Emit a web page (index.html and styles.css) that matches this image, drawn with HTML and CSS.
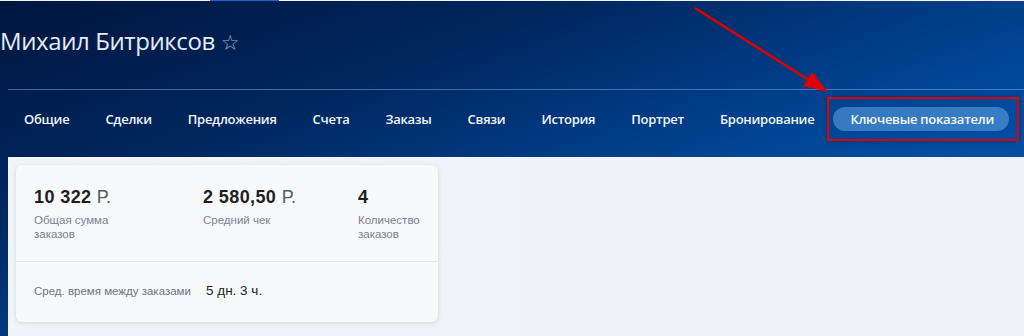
FILE: index.html
```html
<!DOCTYPE html>
<html lang="ru">
<head>
<meta charset="utf-8">
<link rel="stylesheet" href="styles.css">
</head>
<body>
<div class="page">
  <div class="topline"><span class="topline-mark"></span></div>
  <header class="header">
    <h1 class="title">Михаил Битриксов <span class="star">☆</span></h1>
  </header>
  <nav class="tabs">
    <a class="tab">Общие</a>
    <a class="tab">Сделки</a>
    <a class="tab">Предложения</a>
    <a class="tab">Счета</a>
    <a class="tab">Заказы</a>
    <a class="tab">Связи</a>
    <a class="tab">История</a>
    <a class="tab">Портрет</a>
    <a class="tab">Бронирование</a>
    <div class="highlight"><a class="tab tab-active">Ключевые показатели</a></div>
  </nav>
  <main class="content">
    <section class="card">
      <div class="stats">
        <div class="stat s1">
          <div class="value">10 322 <span class="cur">Р.</span></div>
          <div class="label">Общая сумма<br>заказов</div>
        </div>
        <div class="stat s2">
          <div class="value">2 580,50 <span class="cur">Р.</span></div>
          <div class="label">Средний чек</div>
        </div>
        <div class="stat s3">
          <div class="value">4</div>
          <div class="label">Количество<br>заказов</div>
        </div>
      </div>
      <div class="extra">
        <span class="extra-label">Сред. время между заказами</span>
        <span class="extra-value">5 дн. 3 ч.</span>
      </div>
    </section>
  </main>
  <svg class="arrow" width="1024" height="336" viewBox="0 0 1024 336">
    <line x1="695" y1="8" x2="815" y2="84" stroke="#e00000" stroke-width="2.5"/>
    <polygon points="828,92 803,86 812,72" fill="#e00000"/>
  </svg>
</div>
</body>
</html>
```

FILE: styles.css
```css
* { box-sizing: border-box; margin: 0; padding: 0; }
html, body { width: 1024px; height: 336px; overflow: hidden; }
body {
  font-family: "Open Sans", "Liberation Sans", sans-serif;
  background: #fff;
}
.page {
  position: relative;
  width: 1024px;
  height: 336px;
  background: linear-gradient(160deg, #00163f 0%, #00275f 30%, #004696 60%, #0a5ec0 100%);
  overflow: hidden;
}
.topline {
  height: 1px;
  background: #f2f4f7;
  display: flex;
}
.topline-mark {
  margin-left: 210px;
  width: 69px;
  height: 1px;
  background: #1e5fd6;
}
.header {
  height: 88px;
  padding-top: 24px;
}
.title {
  font-family: "Open Sans", sans-serif;
  font-weight: 400;
  font-size: 24px;
  line-height: 32px;
  color: #e6ebf2;
  letter-spacing: -0.4px;
}
.star {
  font-size: 21px;
  color: #9fb0c8;
  font-family: "DejaVu Sans", sans-serif;
}
.tabs {
  margin-left: 8px;
  border-top: 1px solid rgba(160, 185, 220, 0.45);
  height: 68px;
  display: flex;
  align-items: center;
  padding-left: 16px;
  padding-bottom: 10px;
}
.tab {
  font-family: "Open Sans", sans-serif;
  font-weight: 600;
  font-size: 13px;
  line-height: 18px;
  color: #f1f4f8;
  margin-right: 36px;
  white-space: nowrap;
  letter-spacing: -0.26px;
}
.highlight {
  border: 2px solid #e00000;
  margin-left: -23px;
  padding: 8px 8px 8px 4px;
  box-shadow: 0 0 4px rgba(0,0,0,0.3);
}
.tab-active {
  display: block;
  margin: 0;
  background: rgba(120, 185, 245, 0.45);
  border-radius: 12px;
  padding: 3px 15px 3px 17px;
  color: #f4f7fb;
}
.content {
  margin-left: 8px;
  height: 179px;
  background: linear-gradient(90deg, #f1f4f8, #eef2f6);
  padding: 8px 0 0 8px;
}
.card {
  width: 422px;
  height: 157px;
  background: #f7f9fb;
  border-radius: 6px;
  box-shadow: 0 1px 5px rgba(0, 0, 0, 0.12);
  font-family: "Liberation Sans", Arial, sans-serif;
}
.stats {
  display: flex;
  height: 97px;
  padding: 22px 0 0 18px;
  border-bottom: 1px solid #e4e8ed;
}
.stat .value {
  font-size: 18px;
  font-weight: 700;
  color: #1d1f22;
  line-height: 20px;
  letter-spacing: 0.4px;
}
.stat .cur {
  font-weight: 400;
  color: #535c69;
  letter-spacing: 0.6px;
}
.stat .label {
  margin-top: 6px;
  font-size: 11.5px;
  line-height: 14px;
  color: #7a8290;
}
.s1 { width: 169px; }
.s2 { width: 155px; }
.s3 { width: 80px; }
.extra {
  display: flex;
  align-items: center;
  padding: 21px 0 0 18px;
}
.extra-label {
  font-size: 11.5px;
  color: #6d7480;
  width: 172px;
}
.extra-value {
  font-size: 13.5px;
  color: #1d1f22;
}
.arrow {
  position: absolute;
  left: 0;
  top: 0;
  pointer-events: none;
}
```
